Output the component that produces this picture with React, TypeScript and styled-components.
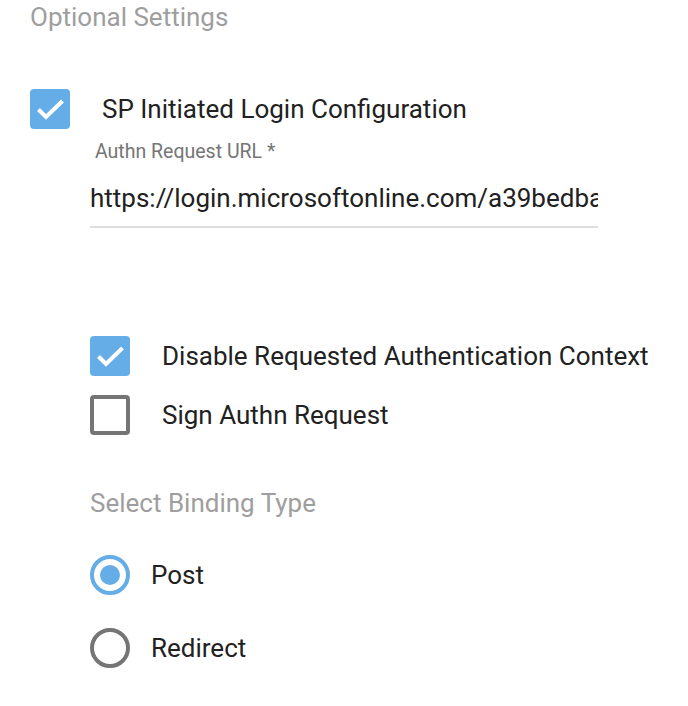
import React from "react";
import styled, { createGlobalStyle } from "styled-components";

const GlobalStyle = createGlobalStyle`
  html, body {
    margin: 0;
    padding: 0;
    background: #ffffff;
  }
  body {
    font-family: Roboto, "Liberation Sans", Arial, sans-serif;
    color: #212121;
  }
`;

const Root = styled.div`
  width: 688px;
  height: 706px;
  padding-left: 30px;
  box-sizing: border-box;
  overflow: hidden;
`;

const Heading = styled.div<{ $top?: number }>`
  margin-top: ${(p) => p.$top || 0}px;
  font-size: 26px;
  line-height: 34px;
  color: #9e9e9e;
`;

const Row = styled.div<{ $top?: number; $gap: number }>`
  display: flex;
  align-items: center;
  height: 40px;
  margin-top: ${(p) => p.$top || 0}px;
  gap: ${(p) => p.$gap}px;
  font-size: 26px;
  white-space: nowrap;
`;

const Box = styled.div<{ $checked?: boolean }>`
  width: 40px;
  height: 40px;
  box-sizing: border-box;
  border-radius: 4px;
  flex-shrink: 0;
  display: flex;
  align-items: center;
  justify-content: center;
  background: ${(p) => (p.$checked ? "#65ade6" : "#fff")};
  border: ${(p) => (p.$checked ? "none" : "4px solid #757575")};
`;

const Radio = styled.div<{ $checked?: boolean }>`
  width: 40px;
  height: 40px;
  box-sizing: border-box;
  border-radius: 50%;
  flex-shrink: 0;
  display: flex;
  align-items: center;
  justify-content: center;
  border: 4px solid ${(p) => (p.$checked ? "#65ade6" : "#757575")};

  &::after {
    content: "";
    display: ${(p) => (p.$checked ? "block" : "none")};
    width: 20px;
    height: 20px;
    border-radius: 50%;
    background: #65ade6;
  }
`;

const Nested = styled.div`
  padding-left: 60px;
`;

const FieldLabel = styled.div`
  margin-top: 12px;
  padding-left: 5px;
  font-size: 19.5px;
  line-height: 22px;
  color: #757575;
`;

const Field = styled.div`
  width: 508px;
  margin-top: 17px;
  padding-bottom: 10px;
  border-bottom: 2px solid #dddddd;
  font-size: 26px;
  line-height: 36px;
  color: #212121;
  white-space: nowrap;
  overflow: hidden;
`;

const Check = () => (
  <svg width="29" height="22" viewBox="0 0 29 22">
    <path d="M2.5 11.5 L10 19 L26.5 3" fill="none" stroke="#fff" strokeWidth="4" />
  </svg>
);

export default function App() {
  return (
    <Root>
      <GlobalStyle />
      <Heading>Optional Settings</Heading>

      <Row $top={55} $gap={32}>
        <Box $checked>
          <Check />
        </Box>
        SP Initiated Login Configuration
      </Row>

      <Nested>
        <FieldLabel>Authn Request URL *</FieldLabel>
        <Field>https://login.microsoftonline.com/a39bedba</Field>

        <Row $top={108} $gap={32}>
          <Box $checked>
            <Check />
          </Box>
          Disable Requested Authentication Context
        </Row>
        <Row $top={19} $gap={32}>
          <Box />
          Sign Authn Request
        </Row>

        <Heading $top={51}>Select Binding Type</Heading>

        <Row $top={35} $gap={21}>
          <Radio $checked />
          Post
        </Row>
        <Row $top={33} $gap={21}>
          <Radio />
          Redirect
        </Row>
      </Nested>
    </Root>
  );
}
